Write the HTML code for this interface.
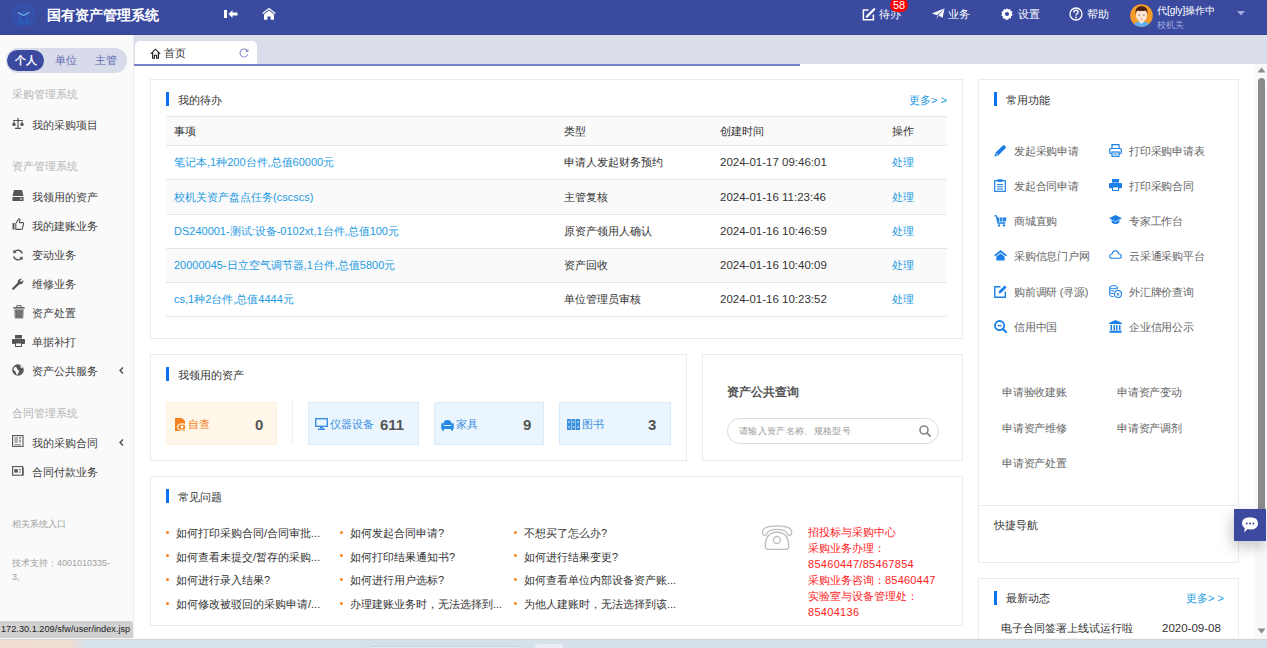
<!DOCTYPE html>
<html><head><meta charset="utf-8">
<style>
*{margin:0;padding:0;box-sizing:border-box}
html,body{width:1267px;height:648px;overflow:hidden;background:#fff;font-family:"Liberation Sans",sans-serif;font-size:11px;color:#333}
.a{position:absolute;white-space:nowrap}
svg{display:block}
#hdr{position:absolute;left:0;top:0;width:1267px;height:35px;background:#394a9f;border-bottom:1px solid #33438f}
#side{position:absolute;left:0;top:35px;width:134px;height:603px;background:#fafafa;border-right:1px solid #ececec}
#tabs{position:absolute;left:134px;top:35px;width:1133px;height:29px;background:#dadeea}
#content{position:absolute;left:134px;top:64px;width:1121px;height:574px;background:#fff}
.card{position:absolute;border:1px solid #ebebeb;background:#fff}
.bar{position:absolute;width:3px;height:14px;background:#0a72ec}
.ttl{position:absolute;font-size:11px;color:#333;line-height:14px}
.lnk{color:#1d9ae2}
.sec{position:absolute;left:12px;font-size:11px;color:#b5b5b5;line-height:14px}
.it{position:absolute;left:32px;font-size:11px;color:#3d3d3d;line-height:14px}
.ic{position:absolute;left:12px}
</style></head><body>

<div id="hdr">
  <svg class="a" style="left:12px;top:3px" width="24" height="24" viewBox="0 0 24 24">
    <circle cx="11.6" cy="12" r="11.3" fill="#3650a8" opacity=".55"/>
    <circle cx="11.6" cy="12" r="10.6" fill="none" stroke="#2c5cb6" stroke-width="1.2" opacity=".7"/>
    <circle cx="11.6" cy="12" r="8.8" fill="none" stroke="#2c5cb6" stroke-width="1.6" stroke-dasharray="1.3 1.4" opacity=".55"/>
    <path d="M7 18.6 L7 10 Q11.6 4.6 16.2 10 L16.2 18.6Z" fill="#2a5fbc" opacity=".85"/>
    <rect x="9.2" y="12.2" width="4.8" height="6" fill="#3148a0" opacity=".8"/>
    <rect x="6" y="18.2" width="11.2" height="2.4" fill="#2a5fbc" opacity=".85"/>
    <path d="M5.8 9.4 L11.6 12.4 L17.4 9.4" fill="none" stroke="#8ec0ee" stroke-width="1.1" opacity=".9"/>
  </svg>
  <div class="a" style="left:47px;top:7px;font-size:14px;font-weight:bold;color:#fff;line-height:17px">国有资产管理系统</div>
  <!-- collapse icon -->
  <svg class="a" style="left:224px;top:10px" width="14" height="9" viewBox="0 0 14 9">
    <rect x="0" y="0" width="3" height="8" fill="#fff"/>
    <path d="M4.5 4 L8.5 0 L8.5 2.5 L13.5 2.5 L13.5 5.5 L8.5 5.5 L8.5 8Z" fill="#fff"/>
  </svg>
  <!-- home icon -->
  <svg class="a" style="left:262px;top:8px" width="14" height="12" viewBox="0 0 14 12">
    <path d="M0.6 5.6 L7 0.6 L13.4 5.6" fill="none" stroke="#fff" stroke-width="1.3"/>
    <path d="M2 6.3 L7 2.4 L12 6.3 L12 11.7 L8.6 11.7 L8.6 8.4 L5.4 8.4 L5.4 11.7 L2 11.7Z" fill="#fff"/>
  </svg>

  <!-- right side -->
  <svg class="a" style="left:862px;top:7px" width="14" height="14" viewBox="0 0 14 14"><path d="M6.6 3 H1.4 V12.8 H11.4 V7.6" fill="none" stroke="#fff" stroke-width="1.5"/><path d="M4.8 9.6 L12.2 2.2" stroke="#fff" stroke-width="2.2" stroke-linecap="round"/></svg>
  <div class="a" style="left:879px;top:7px;font-size:11px;color:#fff;line-height:14px">待办</div>
  <div class="a" style="left:890px;top:-2px;width:18px;height:14px;border-radius:7px;background:#f00;color:#fff;font-size:11px;line-height:14px;text-align:center">58</div>
  <svg class="a" style="left:932px;top:8px" width="13" height="12" viewBox="0 0 13 12">
    <path d="M0 5.6 L12.6 0.3 L5.2 7.2Z" fill="#fff"/>
    <path d="M12.6 0.3 L10.6 9.8 L6.4 7.4Z" fill="#fff"/>
    <path d="M5.4 7.5 L6.2 8 L4.6 11.6Z" fill="#fff"/>
  </svg>
  <div class="a" style="left:948px;top:7px;font-size:11px;color:#fff;line-height:14px">业务</div>
  <svg class="a" style="left:1001px;top:8px" width="12" height="12" viewBox="0 0 12 12">
    <path d="M6 0.2 L7.3 1.6 L9.3 1 L9.6 3 L11.6 3.6 L10.8 5.6 L11.8 7 L10 8.2 L10 10.2 L8 10.2 L7 12 L6 11.6 L5 12 L3.8 10.4 L1.8 10.4 L1.8 8.4 L0.2 7.2 L1.2 5.6 L0.4 3.8 L2.4 3 L2.8 1 L4.8 1.6Z" fill="#fff"/>
    <circle cx="6" cy="6" r="2.1" fill="#3b4a9f"/>
  </svg>
  <div class="a" style="left:1018px;top:7px;font-size:11px;color:#fff;line-height:14px">设置</div>
  <svg class="a" style="left:1069px;top:7px" width="14" height="14" viewBox="0 0 14 14">
    <circle cx="7" cy="7" r="6" fill="none" stroke="#fff" stroke-width="1.3"/>
    <path d="M4.9 5.4 Q4.9 3.3 7 3.3 Q9.1 3.3 9.1 5.2 Q9.1 6.3 7.8 7 Q7 7.4 7 8.6" fill="none" stroke="#fff" stroke-width="1.4"/>
    <circle cx="7" cy="10.4" r=".9" fill="#fff"/>
  </svg>
  <div class="a" style="left:1087px;top:7px;font-size:11px;color:#fff;line-height:14px">帮助</div>
  <!-- avatar -->
  <svg class="a" style="left:1130px;top:4px" width="23" height="23" viewBox="0 0 23 23">
    <defs><clipPath id="cav"><circle cx="11.5" cy="11.5" r="11.3"/></clipPath></defs>
    <circle cx="11.5" cy="11.5" r="11.3" fill="#f59c2a"/>
    <g clip-path="url(#cav)">
      <path d="M2.5 23 Q3.5 17.6 11.5 17.2 Q19.5 17.6 20.5 23Z" fill="#5cb0f2"/>
      <path d="M8.6 17.4 L11.5 19.8 L14.4 17.4Z" fill="#fff"/>
      <rect x="10" y="15" width="3" height="3" fill="#f7d3bb"/>
      <ellipse cx="11.5" cy="11.2" rx="5.6" ry="6.4" fill="#fde5d3"/>
      <path d="M5.4 11 Q4.6 2.2 11.5 2 Q18.4 2.2 17.6 11 Q17 7 15.6 6.4 Q11.5 7.6 7.2 6.4 Q6 7 5.4 11Z" fill="#4b2310"/>
      <path d="M8.2 11.2 h2 M12.8 11.2 h2" stroke="#6b4a3a" stroke-width=".7"/>
      <ellipse cx="11.5" cy="15" rx="1" ry=".55" fill="#ef5f5f"/>
    </g>
  </svg>
  <div class="a" style="left:1157px;top:5px;font-size:10px;color:#fff;line-height:12px">代[gly]操作中</div>
  <div class="a" style="left:1157px;top:19px;font-size:9.4px;color:#a3aae0;line-height:12px">校机关</div>
  <svg class="a" style="left:1237px;top:11px" width="8" height="5" viewBox="0 0 8 5"><path d="M0 0 L8 0 L4 4.5Z" fill="#a3aae0"/></svg>
</div>

<div id="side">
  <div class="a" style="left:5.5px;top:13.2px;width:121px;height:24.4px;border-radius:12.2px;background:#d8dbea"></div>
  <div class="a" style="left:7.2px;top:14.7px;width:36.5px;height:21.2px;border-radius:10.6px;background:#3b4a9f"></div>
  <div class="a" style="left:15px;top:18px;font-size:11px;font-weight:bold;color:#fff;line-height:14px">个人</div>
  <div class="a" style="left:55px;top:18px;font-size:11px;color:#5b67ae;line-height:14px">单位</div>
  <div class="a" style="left:95px;top:18px;font-size:11px;color:#5b67ae;line-height:14px">主管</div>

  <div class="sec" style="top:52px">采购管理系统</div>
  <svg class="ic" style="top:83px" width="12" height="11" viewBox="0 0 12 11"><path d="M6 0 V10 M3 10.3 H9 M1 2.5 H11" stroke="#555" stroke-width="1.2" fill="none"/><path d="M0 7 L2 3 L4 7Z M8 7 L10 3 L12 7Z" fill="#555"/><path d="M0 7 Q2 9 4 7 M8 7 Q10 9 12 7" fill="#555"/></svg>
  <div class="it" style="top:83px">我的采购项目</div>

  <div class="sec" style="top:124px">资产管理系统</div>
  <svg class="ic" style="top:155px" width="12" height="11" viewBox="0 0 12 11"><path d="M2 0 H10 L11.5 6 H0.5Z" fill="#555"/><rect x="0.5" y="7" width="11" height="4" fill="#555"/><rect x="8" y="8.5" width="2" height="1" fill="#fafafa"/></svg>
  <div class="it" style="top:155px">我领用的资产</div>
  <svg class="ic" style="top:183px" width="12" height="12" viewBox="0 0 12 12"><rect x="0.5" y="5" width="2" height="6.5" fill="#555"/><path d="M3.8 5.5 L6.5 1.2 Q7.6 0.2 8 1.6 L7.4 4.6 L10.8 4.6 Q11.8 4.8 11.5 6 L10.4 10.6 Q10.1 11.4 9.2 11.4 L3.8 11.4Z" fill="none" stroke="#555" stroke-width="1.1"/></svg>
  <div class="it" style="top:184px">我的建账业务</div>
  <svg class="ic" style="top:214px" width="12" height="12" viewBox="0 0 12 12"><path d="M10.3 4.6 A4.6 4.6 0 0 0 2 3.2" fill="none" stroke="#555" stroke-width="1.4"/><path d="M1.2 1 L1.4 4.6 L4.8 3.6Z" fill="#555"/><path d="M1.7 7.4 A4.6 4.6 0 0 0 10 8.8" fill="none" stroke="#555" stroke-width="1.4"/><path d="M10.8 11 L10.6 7.4 L7.2 8.4Z" fill="#555"/></svg>
  <div class="it" style="top:213px">变动业务</div>
  <svg class="ic" style="top:243px" width="12" height="12" viewBox="0 0 12 12"><path d="M1.2 10.8 L6.4 5.6" stroke="#555" stroke-width="2.2" stroke-linecap="round"/><path d="M6 6 Q4.8 2.6 7.6 1 Q9 0.4 10 0.8 L8 2.8 L9.2 4 L11.2 2 Q11.6 3 11 4.4 Q9.4 7.2 6 6Z" fill="#555"/></svg>
  <div class="it" style="top:242px">维修业务</div>
  <svg class="ic" style="top:270px;left:12.5px" width="12" height="14" viewBox="0 0 12 14"><rect x="0.3" y="2" width="11.4" height="1.6" fill="#666"/><path d="M3.8 2 V0.6 H8.2 V2" fill="none" stroke="#666" stroke-width="1"/><path d="M1.2 4.2 H10.8 L10.2 13.6 H1.8Z" fill="#8a8a8a"/><path d="M3.4 5 V12.8 M5.2 5 V12.8 M7 5 V12.8 M8.8 5 V12.8" stroke="#5a5a5a" stroke-width=".8"/></svg>
  <div class="it" style="top:271px">资产处置</div>
  <svg class="ic" style="top:300px" width="13" height="12" viewBox="0 0 13 12"><rect x="3" y="0" width="7" height="3.5" fill="#555"/><rect x="0" y="4" width="13" height="5" rx="1" fill="#555"/><rect x="3" y="7.5" width="7" height="4.5" fill="#555"/><rect x="4" y="8.5" width="5" height="2.5" fill="#fafafa"/></svg>
  <div class="it" style="top:300px">单据补打</div>
  <svg class="ic" style="top:329px" width="12" height="12" viewBox="0 0 12 12"><circle cx="6" cy="6" r="5.8" fill="#555"/><path d="M2.4 3 Q4 2.6 5 4 Q4.6 5.6 6.4 6 Q7.6 7 6.6 8.6 Q6 10.4 5 11.2 Q4 9 3.4 7.4 Q2.2 6.6 1.4 5.4Z M7.4 1.2 Q9 2 8.6 3.4 Q10 3.6 10.8 4.6 Q11 3 9.8 1.8Z" fill="#fafafa"/></svg>
  <div class="it" style="top:329px">资产公共服务</div>
  <svg class="a" style="left:119px;top:332px" width="5" height="7" viewBox="0 0 5 7"><path d="M4 0.5 L1 3.5 L4 6.5" fill="none" stroke="#444" stroke-width="1.3"/></svg>

  <div class="sec" style="top:371px">合同管理系统</div>
  <svg class="ic" style="top:400px" width="12" height="12" viewBox="0 0 12 12"><rect x="0.6" y="0.6" width="10.4" height="11" fill="none" stroke="#555" stroke-width="1.1"/><path d="M2.4 3 H6 M2.4 5 H6 M2.4 7 H6 M2.4 9.8 H9" stroke="#666" stroke-width="1"/><circle cx="8" cy="2.8" r="0.9" fill="#555"/><path d="M8 4.6 V7.6" stroke="#555" stroke-width="1.1"/></svg>
  <div class="it" style="top:401px">我的采购合同</div>
  <svg class="a" style="left:119px;top:404px" width="5" height="7" viewBox="0 0 5 7"><path d="M4 0.5 L1 3.5 L4 6.5" fill="none" stroke="#444" stroke-width="1.3"/></svg>
  <svg class="ic" style="top:431px" width="12" height="10" viewBox="0 0 12 10"><rect x="0.6" y="0.6" width="10" height="8.6" fill="none" stroke="#555" stroke-width="1.1"/><rect x="11" y="1.5" width="1" height="8" fill="#777"/><rect x="2.2" y="3.2" width="3.6" height="3.4" fill="#555"/><path d="M6.8 3.6 H9 M6.8 6 H9" stroke="#666" stroke-width="1"/></svg>
  <div class="it" style="top:430px">合同付款业务</div>

  <div class="a" style="left:12px;top:483px;font-size:9px;color:#a0a0a0;line-height:12px">相关系统入口</div>
  <div class="a" style="left:12px;top:521px;font-size:9px;color:#a0a0a0;line-height:14px;white-space:normal;width:110px">技术支持：4001010335-<br>3,</div>
</div>

<div id="tabs">
  <div class="a" style="left:1px;top:6px;width:122px;height:23px;background:#fff;border-radius:5px 5px 0 0"></div>
  <svg class="a" style="left:16px;top:13px" width="11" height="11" viewBox="0 0 11 11"><path d="M0.8 5.8 L5.5 1.2 L10.2 5.8 M2.6 4.4 V10.2 H4.4 V7.2 H6.6 V10.2 H8.4 V4.4" fill="none" stroke="#222" stroke-width="1.15"/></svg>
  <div class="a" style="left:30px;top:11px;font-size:11px;color:#333;line-height:14px">首页</div>
  <svg class="a" style="left:105px;top:13px" width="10" height="10" viewBox="0 0 10 10"><path d="M8.6 3.2 A4 4 0 1 0 8.8 6.4" fill="none" stroke="#8a94cf" stroke-width="1.1"/><path d="M9.4 0.8 L9.4 4 L6.2 4Z" fill="#8a94cf"/></svg>
</div>

<div id="content"></div>
<div class="a" style="left:134px;top:64px;width:666px;height:2px;background:#7482cb"></div>

<!-- 待办 card -->
<div class="card" style="left:150px;top:79px;width:813px;height:260px"></div>
<div class="bar" style="left:166px;top:92px"></div>
<div class="ttl a" style="left:178px;top:93px">我的待办</div>
<div class="a lnk" style="left:909px;top:93px;font-size:11px;line-height:14px">更多&gt; &gt;</div>
<div class="a" style="left:166px;top:117px;width:781px;height:28px;background:#fafafa"></div>
<div class="a" style="left:166px;top:180px;width:781px;height:34px;background:#fafafa"></div>
<div class="a" style="left:166px;top:249px;width:781px;height:33px;background:#fafafa"></div>
<div class="a" style="left:166px;top:116px;width:781px;height:1px;background:#e6e6e6"></div>
<div class="a" style="left:166px;top:145px;width:781px;height:1px;background:#e6e6e6"></div>
<div class="a" style="left:166px;top:179px;width:781px;height:1px;background:#e6e6e6"></div>
<div class="a" style="left:166px;top:214px;width:781px;height:1px;background:#e6e6e6"></div>
<div class="a" style="left:166px;top:248px;width:781px;height:1px;background:#e6e6e6"></div>
<div class="a" style="left:166px;top:282px;width:781px;height:1px;background:#e6e6e6"></div>
<div class="a" style="left:166px;top:316px;width:781px;height:1px;background:#e6e6e6"></div>
<div class="a" style="left:174px;top:124px;line-height:14px">事项</div><div class="a" style="left:564px;top:124px;line-height:14px">类型</div><div class="a" style="left:720px;top:124px;line-height:14px">创建时间</div><div class="a" style="left:892px;top:124px;line-height:14px">操作</div>
<div class="a lnk" style="left:174px;top:155px;line-height:14px">笔记本,1种200台件,总值60000元</div><div class="a" style="left:564px;top:155px;line-height:14px">申请人发起财务预约</div><div class="a" style="left:720px;top:155px;line-height:14px;font-size:11.5px">2024-01-17 09:46:01</div><div class="a lnk" style="left:892px;top:155px;line-height:14px">处理</div>
<div class="a lnk" style="left:174px;top:190px;line-height:14px">校机关资产盘点任务(cscscs)</div><div class="a" style="left:564px;top:190px;line-height:14px">主管复核</div><div class="a" style="left:720px;top:190px;line-height:14px;font-size:11.5px">2024-01-16 11:23:46</div><div class="a lnk" style="left:892px;top:190px;line-height:14px">处理</div>
<div class="a lnk" style="left:174px;top:224px;line-height:14px">DS240001-测试:设备-0102xt,1台件,总值100元</div><div class="a" style="left:564px;top:224px;line-height:14px">原资产领用人确认</div><div class="a" style="left:720px;top:224px;line-height:14px;font-size:11.5px">2024-01-16 10:46:59</div><div class="a lnk" style="left:892px;top:224px;line-height:14px">处理</div>
<div class="a lnk" style="left:174px;top:258px;line-height:14px">20000045-日立空气调节器,1台件,总值5800元</div><div class="a" style="left:564px;top:258px;line-height:14px">资产回收</div><div class="a" style="left:720px;top:258px;line-height:14px;font-size:11.5px">2024-01-16 10:40:09</div><div class="a lnk" style="left:892px;top:258px;line-height:14px">处理</div>
<div class="a lnk" style="left:174px;top:292px;line-height:14px">cs,1种2台件,总值4444元</div><div class="a" style="left:564px;top:292px;line-height:14px">单位管理员审核</div><div class="a" style="left:720px;top:292px;line-height:14px;font-size:11.5px">2024-01-16 10:23:52</div><div class="a lnk" style="left:892px;top:292px;line-height:14px">处理</div>
<!-- 领用 card -->
<div class="card" style="left:150px;top:354px;width:537px;height:107px"></div>
<div class="bar" style="left:166px;top:367px"></div>
<div class="ttl a" style="left:178px;top:368px">我领用的资产</div>
<div class="a" style="left:166px;top:402px;width:111px;height:43px;background:#fff7ea;border:1px solid #fcefdc"></div>
<svg class="a" style="left:175px;top:418px" width="12" height="13" viewBox="0 0 12 13"><path d="M0 0 H7 L10 3 V13 H0Z" fill="#f5821f"/><ellipse cx="7" cy="9" rx="4.6" ry="3.2" fill="none" stroke="#fff7ea" stroke-width="1.2"/><circle cx="7" cy="9" r="1.4" fill="#fff7ea"/></svg>
<div class="a" style="left:188px;top:417px;font-size:11px;color:#f5821f;line-height:14px">自查</div>
<div class="a" style="left:255px;top:416px;font-size:15px;font-weight:bold;color:#555;line-height:17px">0</div>
<div class="a" style="left:292px;top:402px;width:1px;height:43px;background:#eee"></div>
<div class="a" style="left:308px;top:402px;width:111px;height:43px;background:#eaf5fe;border:1px solid #d9ebfb"></div>
<svg class="a" style="left:315px;top:418px" width="13" height="12" viewBox="0 0 13 12"><rect x="0.7" y="0.7" width="11.6" height="7.6" fill="none" stroke="#3b8fdf" stroke-width="1.4"/><rect x="5" y="9" width="3" height="1.5" fill="#3b8fdf"/><rect x="3" y="10.5" width="7" height="1.5" fill="#3b8fdf"/></svg>
<div class="a" style="left:330px;top:417px;font-size:11px;color:#3b8fdf;line-height:14px">仪器设备</div>
<div class="a" style="left:380px;top:416px;font-size:15px;font-weight:bold;color:#555;line-height:17px">611</div>
<div class="a" style="left:434px;top:402px;width:110px;height:43px;background:#eaf5fe;border:1px solid #d9ebfb"></div>
<svg class="a" style="left:441px;top:419px" width="13" height="12" viewBox="0 0 13 12"><path d="M2.6 5 Q2.4 1 6.5 1 Q10.6 1 10.4 5 V6 H2.6Z" fill="#2289e6"/><path d="M0.3 5.4 Q0.3 4 1.6 4 Q2.8 4 2.8 5.4 V7 H10.2 V5.4 Q10.2 4 11.4 4 Q12.7 4 12.7 5.4 V10 H0.3Z" fill="#2289e6"/><rect x="1" y="10" width="2" height="1.6" fill="#2289e6"/><rect x="10" y="10" width="2" height="1.6" fill="#2289e6"/></svg>
<div class="a" style="left:456px;top:417px;font-size:11px;color:#3b8fdf;line-height:14px">家具</div>
<div class="a" style="left:523px;top:416px;font-size:15px;font-weight:bold;color:#555;line-height:17px">9</div>
<div class="a" style="left:559px;top:402px;width:112px;height:43px;background:#eaf5fe;border:1px solid #d9ebfb"></div>
<svg class="a" style="left:567px;top:419px" width="13" height="11" viewBox="0 0 13 11"><rect x="0" y="0" width="4" height="11" fill="#3b8fdf"/><rect x="4.5" y="0" width="4" height="11" fill="#3b8fdf"/><rect x="9" y="0" width="4" height="11" fill="#3b8fdf"/><path d="M1 3 H3 M1 8 H3 M5.5 3 H7.5 M5.5 8 H7.5 M10 3 H12 M10 8 H12" stroke="#eaf5fe" stroke-width="1"/></svg>
<div class="a" style="left:582px;top:417px;font-size:11px;color:#3b8fdf;line-height:14px">图书</div>
<div class="a" style="left:648px;top:416px;font-size:15px;font-weight:bold;color:#555;line-height:17px">3</div>

<!-- 查询 card -->
<div class="card" style="left:702px;top:354px;width:261px;height:107px"></div>
<div class="a" style="left:727px;top:384px;font-size:12.3px;font-weight:bold;color:#555;line-height:16px">资产公共查询</div>
<div class="a" style="left:727px;top:418px;width:212px;height:26px;border:1px solid #dcdcdc;border-radius:13px;background:#fff"></div>
<div class="a" style="left:739px;top:425px;font-size:9px;letter-spacing:0.35px;color:#999;line-height:12px">请输入资产名称、规格型号</div>
<svg class="a" style="left:919px;top:425px" width="12" height="12" viewBox="0 0 12 12"><circle cx="5" cy="5" r="4" fill="none" stroke="#888" stroke-width="1.6"/><path d="M8 8 L11.2 11.2" stroke="#888" stroke-width="1.8" stroke-linecap="round"/></svg>

<!-- 问题 card -->
<div class="card" style="left:150px;top:476px;width:813px;height:150px"></div>
<div class="bar" style="left:166px;top:489px"></div>
<div class="ttl a" style="left:178px;top:490px">常见问题</div>
<div class="a" style="left:165.8px;top:530.8px;width:3.6px;height:3.6px;border-radius:50%;background:#f5821f"></div><div class="a" style="left:176px;top:526px;line-height:14px;color:#333">如何打印采购合同/合同审批...</div>
<div class="a" style="left:339.8px;top:530.8px;width:3.6px;height:3.6px;border-radius:50%;background:#f5821f"></div><div class="a" style="left:350px;top:526px;line-height:14px;color:#333">如何发起合同申请?</div>
<div class="a" style="left:513.8px;top:530.8px;width:3.6px;height:3.6px;border-radius:50%;background:#f5821f"></div><div class="a" style="left:524px;top:526px;line-height:14px;color:#333">不想买了怎么办?</div>
<div class="a" style="left:165.8px;top:553.8px;width:3.6px;height:3.6px;border-radius:50%;background:#f5821f"></div><div class="a" style="left:176px;top:550px;line-height:14px;color:#333">如何查看未提交/暂存的采购...</div>
<div class="a" style="left:339.8px;top:553.8px;width:3.6px;height:3.6px;border-radius:50%;background:#f5821f"></div><div class="a" style="left:350px;top:550px;line-height:14px;color:#333">如何打印结果通知书?</div>
<div class="a" style="left:513.8px;top:553.8px;width:3.6px;height:3.6px;border-radius:50%;background:#f5821f"></div><div class="a" style="left:524px;top:550px;line-height:14px;color:#333">如何进行结果变更?</div>
<div class="a" style="left:165.8px;top:577.8px;width:3.6px;height:3.6px;border-radius:50%;background:#f5821f"></div><div class="a" style="left:176px;top:573px;line-height:14px;color:#333">如何进行录入结果?</div>
<div class="a" style="left:339.8px;top:577.8px;width:3.6px;height:3.6px;border-radius:50%;background:#f5821f"></div><div class="a" style="left:350px;top:573px;line-height:14px;color:#333">如何进行用户选标?</div>
<div class="a" style="left:513.8px;top:577.8px;width:3.6px;height:3.6px;border-radius:50%;background:#f5821f"></div><div class="a" style="left:524px;top:573px;line-height:14px;color:#333">如何查看单位内部设备资产账...</div>
<div class="a" style="left:165.8px;top:601.8px;width:3.6px;height:3.6px;border-radius:50%;background:#f5821f"></div><div class="a" style="left:176px;top:597px;line-height:14px;color:#333">如何修改被驳回的采购申请/...</div>
<div class="a" style="left:339.8px;top:601.8px;width:3.6px;height:3.6px;border-radius:50%;background:#f5821f"></div><div class="a" style="left:350px;top:597px;line-height:14px;color:#333">办理建账业务时，无法选择到...</div>
<div class="a" style="left:513.8px;top:601.8px;width:3.6px;height:3.6px;border-radius:50%;background:#f5821f"></div><div class="a" style="left:524px;top:597px;line-height:14px;color:#333">为他人建账时，无法选择到该...</div>
<svg class="a" style="left:761px;top:525px" width="33" height="26" viewBox="0 0 33 26"><path d="M1.3 7.6 Q1 1 16 0.9 Q31 1 30.7 7.6 Q30.3 10.4 28.2 10.4 Q26.5 10.4 26 8.6 Q24.5 4.4 16 4.4 Q7.5 4.4 6 8.6 Q5.5 10.4 3.8 10.4 Q1.7 10.4 1.3 7.6Z" fill="none" stroke="#bdbdbd" stroke-width="1.3"/><path d="M4.3 21.6 Q4 12.6 9.5 8.8 Q16 5.2 22.5 8.8 Q28 12.6 27.7 21.6 Q27.6 24.4 25 24.4 H7 Q4.4 24.4 4.3 21.6Z" fill="none" stroke="#bdbdbd" stroke-width="1.3"/><circle cx="15.9" cy="15" r="3.5" fill="none" stroke="#bdbdbd" stroke-width="1.3"/></svg>
<div class="a" style="left:808px;top:525px;font-size:11px;color:#f22;line-height:15.9px">招投标与采购中心<br>采购业务办理：<br><span style="letter-spacing:0.3px">85460447/85467854</span><br>采购业务咨询：<span style="letter-spacing:0.2px">85460447</span><br>实验室与设备管理处：<br><span style="letter-spacing:0.3px">85404136</span></div>
<!-- right panel -->
<div class="card" style="left:978px;top:79px;width:261px;height:484px"></div>
<div class="a" style="left:979px;top:505px;width:259px;height:1px;background:#ebebeb"></div>
<div class="bar" style="left:994px;top:92px"></div>
<div class="ttl a" style="left:1006px;top:93px">常用功能</div>
<div class="a" style="left:994px;top:144px"><svg width="13" height="13" viewBox="0 0 13 13"><path d="M0.5 12.5 L1.4 8.8 L8.8 1.4 Q9.6 0.6 10.4 1.4 L11.6 2.6 Q12.4 3.4 11.6 4.2 L4.2 11.6Z" fill="#1a7fe6"/><path d="M1.4 8.8 L4.2 11.6" stroke="#fff" stroke-width=".8"/></svg></div><div class="a" style="left:1014px;top:144px;line-height:14px;color:#666;letter-spacing:-0.25px">发起采购申请</div><div class="a" style="left:1109px;top:144px"><svg width="13" height="13" viewBox="0 0 13 13"><path d="M3 4.5 V0.7 H10 V4.5" fill="none" stroke="#1a7fe6" stroke-width="1.2"/><rect x="0.7" y="4.5" width="11.6" height="5" rx="1" fill="none" stroke="#1a7fe6" stroke-width="1.2"/><rect x="3" y="8" width="7" height="4.3" fill="#fff" stroke="#1a7fe6" stroke-width="1.2"/><path d="M4.5 10 H8.5" stroke="#1a7fe6" stroke-width="1"/></svg></div><div class="a" style="left:1129px;top:144px;line-height:14px;color:#666;letter-spacing:-0.25px">打印采购申请表</div>
<div class="a" style="left:994px;top:179px"><svg width="12" height="13" viewBox="0 0 12 13"><rect x="0.7" y="1.7" width="10.6" height="10.6" fill="none" stroke="#1a7fe6" stroke-width="1.2"/><rect x="3.5" y="0.3" width="5" height="2.6" fill="#1a7fe6"/><path d="M3 5.5 H9 M3 7.8 H9 M3 10 H9" stroke="#1a7fe6" stroke-width="1"/></svg></div><div class="a" style="left:1014px;top:179px;line-height:14px;color:#666;letter-spacing:-0.25px">发起合同申请</div><div class="a" style="left:1109px;top:179px"><svg width="13" height="12" viewBox="0 0 13 12"><rect x="3" y="0" width="7" height="3.6" fill="#1a7fe6"/><rect x="0" y="4" width="13" height="5.2" rx="1" fill="#1a7fe6"/><rect x="3" y="7.4" width="7" height="4.6" fill="#1a7fe6"/><rect x="4" y="8.4" width="5" height="2.6" fill="#fff"/></svg></div><div class="a" style="left:1129px;top:179px;line-height:14px;color:#666;letter-spacing:-0.25px">打印采购合同</div>
<div class="a" style="left:994px;top:215px"><svg width="13" height="12" viewBox="0 0 13 12"><path d="M0.3 0.8 H2.4 L4 8 H11.2" fill="none" stroke="#1a7fe6" stroke-width="1.3"/><path d="M2.9 2.4 H12.6 L11.6 6.6 H3.8Z" fill="#1a7fe6"/><path d="M5.5 2.4 V6.6 M8.2 2.4 V6.6" stroke="#fff" stroke-width=".7"/><circle cx="5" cy="10.4" r="1.2" fill="#1a7fe6"/><circle cx="10" cy="10.4" r="1.2" fill="#1a7fe6"/></svg></div><div class="a" style="left:1014px;top:214px;line-height:14px;color:#666;letter-spacing:-0.25px">商城直购</div><div class="a" style="left:1109px;top:215px"><svg width="13" height="10" viewBox="0 0 13 10"><path d="M6.5 0 L13 3.2 L6.5 6.4 L0 3.2Z" fill="#1a7fe6"/><path d="M2.6 5 V7.6 Q6.5 10.6 10.4 7.6 V5 L6.5 7 Z" fill="#1a7fe6"/></svg></div><div class="a" style="left:1129px;top:214px;line-height:14px;color:#666;letter-spacing:-0.25px">专家工作台</div>
<div class="a" style="left:994px;top:250px"><svg width="13" height="11" viewBox="0 0 13 11"><path d="M6.5 0 L13 5.2 L11.6 6.2 L6.5 2.4 L1.4 6.2 L0 5.2Z" fill="#1a7fe6"/><path d="M2.4 6.4 L6.5 3.4 L10.6 6.4 V10.6 H2.4Z" fill="#1a7fe6"/></svg></div><div class="a" style="left:1014px;top:249px;line-height:14px;color:#666;letter-spacing:-0.25px">采购信息门户网</div><div class="a" style="left:1109px;top:250px"><svg width="13" height="9" viewBox="0 0 13 9"><path d="M3.2 8.3 Q0.6 8.3 0.7 6 Q0.8 4 3 4 Q3.4 1 6.4 0.8 Q9.4 1 9.8 4 Q12.3 4 12.3 6.2 Q12.2 8.3 9.8 8.3Z" fill="none" stroke="#1a7fe6" stroke-width="1.1"/></svg></div><div class="a" style="left:1129px;top:249px;line-height:14px;color:#666;letter-spacing:-0.25px">云采通采购平台</div>
<div class="a" style="left:994px;top:285px"><svg width="13" height="13" viewBox="0 0 13 13"><path d="M6.5 1.7 H0.8 V12.2 H11.3 V6.5" fill="none" stroke="#1a7fe6" stroke-width="1.4"/><path d="M4.6 8.4 L5 6 L10.6 0.4 L12.6 2.4 L7 8Z" fill="#1a7fe6"/></svg></div><div class="a" style="left:1014px;top:285px;line-height:14px;color:#666;letter-spacing:-0.25px">购前调研 (寻源)</div><div class="a" style="left:1109px;top:285px"><svg width="13" height="13" viewBox="0 0 13 13"><ellipse cx="4.5" cy="2.2" rx="3.8" ry="1.6" fill="none" stroke="#1a7fe6" stroke-width="1"/><path d="M0.7 2.2 V10 Q0.7 11.6 4.5 11.6 M8.3 2.2 V4.5 M0.7 4.8 Q2 6.2 5 6 M0.7 7.4 Q2 8.8 4.6 8.6" fill="none" stroke="#1a7fe6" stroke-width="1"/><circle cx="9" cy="9" r="3.5" fill="#fff" stroke="#1a7fe6" stroke-width="1.1"/><path d="M7.6 7.6 L9 9.2 L10.4 7.6 M9 9.2 V11 M7.8 9.6 H10.2" fill="none" stroke="#1a7fe6" stroke-width=".8"/></svg></div><div class="a" style="left:1129px;top:285px;line-height:14px;color:#666;letter-spacing:-0.25px">外汇牌价查询</div>
<div class="a" style="left:994px;top:320px"><svg width="13" height="13" viewBox="0 0 13 13"><circle cx="5.6" cy="5.6" r="4.6" fill="none" stroke="#1a7fe6" stroke-width="1.8"/><path d="M3.6 5.6 H7.6" stroke="#1a7fe6" stroke-width="1.4"/><path d="M8.8 8.8 L12.2 12.2" stroke="#1a7fe6" stroke-width="2" stroke-linecap="round"/></svg></div><div class="a" style="left:1014px;top:320px;line-height:14px;color:#666;letter-spacing:-0.25px">信用中国</div><div class="a" style="left:1109px;top:320px"><svg width="13" height="13" viewBox="0 0 13 13"><path d="M6.5 0 L13 3 V4 H0 V3Z" fill="#1a7fe6"/><path d="M1.5 5 H3 V10 H1.5Z M4.5 5 H6 V10 H4.5Z M7 5 H8.5 V10 H7Z M10 5 H11.5 V10 H10Z" fill="#1a7fe6"/><rect x="0.5" y="10.6" width="12" height="2.2" fill="#1a7fe6"/></svg></div><div class="a" style="left:1129px;top:320px;line-height:14px;color:#666;letter-spacing:-0.25px">企业信用公示</div>
<div class="a" style="left:1002px;top:385px;line-height:14px;color:#666;letter-spacing:-0.25px">申请验收建账</div><div class="a" style="left:1117px;top:385px;line-height:14px;color:#666;letter-spacing:-0.25px">申请资产变动</div>
<div class="a" style="left:1002px;top:421px;line-height:14px;color:#666;letter-spacing:-0.25px">申请资产维修</div><div class="a" style="left:1117px;top:421px;line-height:14px;color:#666;letter-spacing:-0.25px">申请资产调剂</div>
<div class="a" style="left:1002px;top:456px;line-height:14px;color:#666;letter-spacing:-0.25px">申请资产处置</div>
<div class="ttl a" style="left:994px;top:518px">快捷导航</div>
<div class="card" style="left:978px;top:578px;width:261px;height:100px"></div>
<div class="bar" style="left:994px;top:591px"></div>
<div class="ttl a" style="left:1006px;top:591px">最新动态</div>
<div class="a lnk" style="left:1186px;top:591px;font-size:11px;line-height:14px">更多&gt; &gt;</div>
<div class="a" style="left:1001px;top:621px;line-height:14px;color:#333">电子合同签署上线试运行啦</div>
<div class="a" style="left:1162px;top:621px;line-height:14px;color:#333;font-size:11.5px">2020-09-08</div>

<!-- scrollbar -->
<div class="a" style="left:1255px;top:64px;width:12px;height:574px;background:#f8f8f8"></div>
<svg class="a" style="left:1257px;top:67px" width="9" height="6" viewBox="0 0 9 6"><path d="M0.5 5.5 L4.5 0.5 L8.5 5.5Z" fill="#8a8a8a"/></svg>
<div class="a" style="left:1258px;top:78px;width:7px;height:440px;border-radius:3.5px;background:#8a8a8a"></div>
<svg class="a" style="left:1257px;top:628px" width="9" height="6" viewBox="0 0 9 6"><path d="M0.5 0.5 L8.5 0.5 L4.5 5.5Z" fill="#8a8a8a"/></svg>

<!-- chat btn -->
<div class="a" style="left:1234px;top:509px;width:32px;height:32px;background:#3b4a9f;box-shadow:-2px 6px 14px rgba(0,0,0,.22)"></div>
<svg class="a" style="left:1241px;top:516px" width="18" height="18" viewBox="0 0 18 18"><path d="M9 1.2 Q17 1.2 17 7.4 Q17 13.4 9 13.4 Q7.8 13.4 6.6 13.1 L3.2 16.4 L3.8 12.2 Q1 10.4 1 7.4 Q1 1.2 9 1.2Z" fill="#fff"/><circle cx="5.7" cy="7.4" r="1" fill="#3b4a9f"/><circle cx="9" cy="7.4" r="1" fill="#3b4a9f"/><circle cx="12.3" cy="7.4" r="1" fill="#3b4a9f"/></svg>

<!-- status bar -->
<div class="a" style="left:0;top:621px;width:133px;height:17px;background:#d1d1d1;border-radius:0 3px 0 0;font-size:9.2px;letter-spacing:0px;color:#222;line-height:17px;padding-left:1px">172.30.1.209/sfw/user/index.jsp</div>

<!-- bottom strip -->
<div class="a" style="left:0;top:638px;width:1267px;height:1px;background:#f6f6f6"></div>
<div class="a" style="left:0;top:639px;width:1267px;height:1px;background:#d4d4d4"></div>
<div class="a" style="left:0;top:640px;width:1267px;height:8px;background:linear-gradient(90deg,#f0ddd0 0,#f0ddd2 70px,#d6e1ea 86px,#d4dfe9 100%)"></div>
<div class="a" style="left:370px;top:646px;width:150px;height:4px;border:1px solid #c9d3dc;border-radius:3px;background:#e4ebf1"></div>
<div class="a" style="left:535px;top:644px;width:28px;height:6px;border-radius:3px;background:#e9eff4"></div>
</body></html>
